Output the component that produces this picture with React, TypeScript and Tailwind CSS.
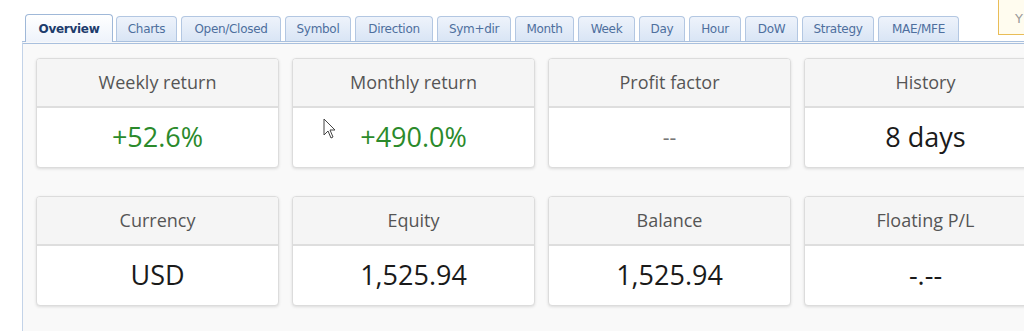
import React from "react";

/*
  Account stats panel: tab strip on top, then two rows of four stat cards.
*/

type Tab = { label: string; width: number };

const tabs: Tab[] = [
  { label: "Overview", width: 88 },
  { label: "Charts", width: 61 },
  { label: "Open/Closed", width: 100 },
  { label: "Symbol", width: 66 },
  { label: "Direction", width: 78 },
  { label: "Sym+dir", width: 74 },
  { label: "Month", width: 59 },
  { label: "Week", width: 57 },
  { label: "Day", width: 46 },
  { label: "Hour", width: 52 },
  { label: "DoW", width: 53 },
  { label: "Strategy", width: 72 },
  { label: "MAE/MFE", width: 81 },
];

type Stat = { title: string; value: string; tone?: "green" | "muted" };

const rowOne: Stat[] = [
  { title: "Weekly return", value: "+52.6%", tone: "green" },
  { title: "Monthly return", value: "+490.0%", tone: "green" },
  { title: "Profit factor", value: "--", tone: "muted" },
  { title: "History", value: "8 days" },
];

const rowTwo: Stat[] = [
  { title: "Currency", value: "USD" },
  { title: "Equity", value: "1,525.94" },
  { title: "Balance", value: "1,525.94" },
  { title: "Floating P/L", value: "-.--" },
];

function StatCard({ stat }: { stat: Stat }) {
  const valueColor =
    stat.tone === "green"
      ? "text-[#2b8a2b] text-[27px]"
      : stat.tone === "muted"
      ? "text-[#777] text-[21px]"
      : "text-[#1a1a1a] text-[27px]";
  return (
    <div className="w-[243px] shrink-0 h-[110px] flex flex-col rounded-[4px] border border-[#dcdcdc] bg-white shadow-[0_1px_3px_rgba(0,0,0,0.12)] overflow-hidden">
      <div className="h-[49px] flex items-center justify-center border-b-2 border-[#dedede] bg-[#f5f5f5] text-[18px] text-[#555]">
        {stat.title}
      </div>
      <div className={`flex-1 flex items-center justify-center ${valueColor}`}>
        {stat.value}
      </div>
    </div>
  );
}

export default function App() {
  return (
    <div className="relative w-[1024px] h-[331px] overflow-hidden bg-white font-['Open_Sans',sans-serif]">
      {/* ── TAB STRIP ── */}
      <div className="flex items-end pl-[25px] pt-[14px] h-[41px] font-['DejaVu_Sans',sans-serif] text-[12px] tracking-[-0.3px]">
        {tabs.map((t, i) =>
          i === 0 ? (
            <div
              key={t.label}
              style={{ width: t.width }}
              className="relative z-10 mr-[3px] h-[28px] -mb-[1px] flex items-center justify-center rounded-t-[4px] border border-b-0 border-[#9fb8d8] bg-gradient-to-b from-white to-[#eef3fb] font-bold text-[#1d3c6c]"
            >
              {t.label}
            </div>
          ) : (
            <div
              key={t.label}
              style={{ width: t.width }}
              className="mr-[4px] h-[25px] flex items-center justify-center rounded-t-[4px] border border-b-0 border-[#b3c7e2] bg-gradient-to-b from-[#eef3fb] to-[#d9e5f5] text-[#4e6f9e]"
            >
              {t.label}
            </div>
          )
        )}
      </div>

      {/* ── PANEL ── */}
      <div className="ml-[22px] w-[1040px] h-[300px] border-t-[3px] border-double border-l border-l-[#c3d3e8] border-t-[#a9c0de] bg-[#f9f9f9] pt-[14px] pl-[13px]">
        <div className="flex gap-[13px]">
          {rowOne.map((s) => (
            <StatCard key={s.title} stat={s} />
          ))}
        </div>
        <div className="flex gap-[13px] mt-[28px]">
          {rowTwo.map((s) => (
            <StatCard key={s.title} stat={s} />
          ))}
        </div>
      </div>

      {/* yellow notice box peeking in at top right */}
      <div className="absolute left-[998px] top-[-2px] w-[40px] h-[37px] border border-[#e9bd57] bg-[#fffcef] pl-[16px] pt-[10px] text-[13px] text-[#999] font-['DejaVu_Sans',sans-serif]">
        Y
      </div>

      {/* mouse pointer */}
      <svg
        className="absolute left-[323px] top-[118px]"
        width="14"
        height="22"
        viewBox="0 0 14 22"
      >
        <path
          d="M1 1 L1 17 L5 13 L8 20 L10 19 L7 12 L12 12 Z"
          fill="white"
          stroke="#444"
          strokeWidth="1"
          strokeLinejoin="round"
        />
      </svg>
    </div>
  );
}
